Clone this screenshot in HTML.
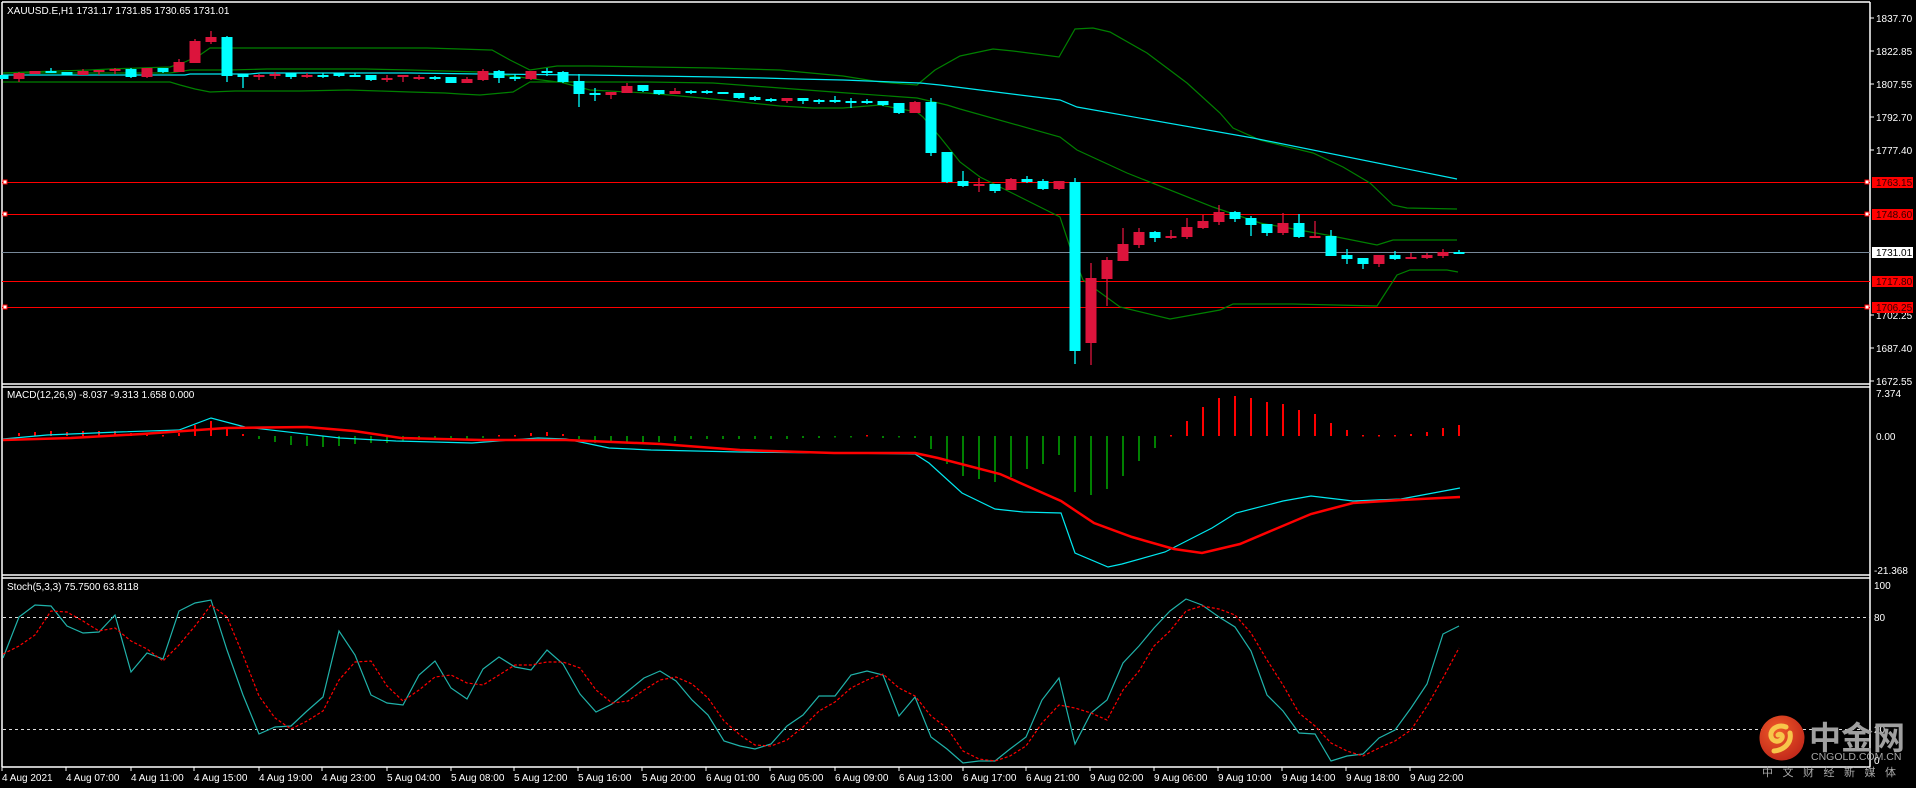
<!DOCTYPE html>
<html><head><meta charset="utf-8"><style>
html,body{margin:0;padding:0;background:#000;width:1916px;height:788px;overflow:hidden}
svg{display:block}
text{font-family:"Liberation Sans","Noto Sans CJK SC",sans-serif;font-size:10px;fill:#fff}
</style></head><body>
<svg id="s" width="1916" height="788" viewBox="0 0 1916 788" xmlns="http://www.w3.org/2000/svg">
<rect width="1916" height="788" fill="#000"/>
<!-- borders -->
<g stroke="#fff" stroke-width="1.5" fill="none">
<line x1="2" y1="2" x2="1870" y2="2"/>
<line x1="2" y1="2" x2="2" y2="767"/>
<line x1="1870" y1="2" x2="1870" y2="767"/>
<line x1="2" y1="384" x2="1870" y2="384"/>
<line x1="2" y1="387" x2="1870" y2="387"/>
<line x1="2" y1="575" x2="1870" y2="575"/>
<line x1="2" y1="578" x2="1870" y2="578"/>
<line x1="2" y1="767" x2="1870" y2="767"/>
</g>
<!-- horizontal levels -->
<g stroke="#f00" stroke-width="1">
<line x1="2" y1="182.5" x2="1870" y2="182.5"/>
<line x1="2" y1="214.5" x2="1870" y2="214.5"/>
<line x1="2" y1="281.5" x2="1870" y2="281.5"/>
<line x1="2" y1="307.5" x2="1870" y2="307.5"/>
</g>
<line x1="2" y1="252.5" x2="1870" y2="252.5" stroke="#778899"/>
<g fill="#fff" stroke="#f00" stroke-width="1">
<rect x="1865" y="180" width="4" height="4"/><rect x="1865" y="212" width="4" height="4"/><rect x="1865" y="305" width="4" height="4"/>
<rect x="3" y="180" width="4" height="4"/><rect x="3" y="212" width="4" height="4"/><rect x="3" y="305" width="4" height="4"/>
</g>
<!-- bands -->
<g fill="none" stroke-width="1.2">
<polyline stroke="#008000" points="3,73 27,72 60,71 90,70 110,69 140,68 170,67 185,62 200,55 210,48 427,48 460,49 490,50 492,50 510,60 530,70 557,66 590,66 650,67 713,68 780,70 800,72 843,76 880,82 917,85 935,70 960,56 993,49 1013,51 1059,57 1075,29 1093,28 1110,32 1147,53 1187,83 1220,113 1233,128 1260,140 1313,153 1343,167 1370,183 1393,205 1407,208 1457,209"/>
<polyline stroke="#008000" points="3,73 170,73 190,70 230,70 267,69 365,69 410,70 480,72 557,82 647,82 713,83 780,88 847,93 917,98 947,105 960,109 1060,137 1077,150 1127,173 1213,207 1260,223 1327,235 1377,245 1393,240 1457,240"/>
<polyline stroke="#008000" points="3,82 170,82 180,85 195,89 210,92 235,91 300,91 348,90 380,91 410,92 445,93 460,94 480,95 513,92 530,82 560,82 590,90 647,93 713,99 780,106 813,108 843,108 880,105 917,112 923,117 940,137 960,162 980,177 1060,217 1070,247 1083,280 1120,307 1170,319 1220,310 1233,304 1293,304 1377,306 1397,275 1410,270 1447,270 1458,272"/>
<polyline stroke="#00e8f0" points="3,75 185,75 190,74 250,74 260,73 410,73 480,74 587,75 653,76 717,77 763,78 797,79 843,80 893,82 920,83 940,85 980,90 1060,100 1077,107 1253,138 1457,179"/>
</g>
<g id="candles"></g>
<!-- MACD -->
<g id="hist"></g>
<polyline fill="none" stroke="#00e8f0" stroke-width="1.2" points="3,439 47,435 118,432 179,430 211,418 245,427 340,438 396,441 472,443 538,438 566,439 609,448 651,450 740,452 834,453 915,454 929,463 962,493 995,509 1023,512 1061,513 1075,553 1108,567 1122,564 1165,552 1212,528 1236,513 1283,501 1311,496 1353,501 1401,499 1460,488"/>
<polyline fill="none" stroke="#f00" stroke-width="2.5" points="3,440 71,438 142,434 226,428 307,427 354,431 401,438 481,440 566,440 661,444 740,450 834,453 915,453 938,458 1000,474 1061,501 1094,523 1132,537 1174,549 1202,553 1240,544 1311,514 1353,503 1401,500 1460,497"/>
<!-- Stoch -->
<g stroke="#ddd" stroke-dasharray="3,3" stroke-width="1">
<line x1="3" y1="617.5" x2="1870" y2="617.5"/>
<line x1="3" y1="729.5" x2="1870" y2="729.5"/>
</g>
<polyline fill="none" stroke="#20b2aa" stroke-width="1.2" points="3,658 19,617 35,605 51,606 67,626 83,633 99,632 115,615 131,672 147,653 163,659 179,611 195,603 211,600 227,650 243,695 259,734 275,727 291,726 307,711 323,697 339,631 355,655 371,695 387,703 403,705 419,675 435,661 451,688 467,699 483,669 499,657 515,667 531,670 547,650 563,664 580,694 596,712 612,704 628,691 644,678 660,671 676,681 692,700 708,715 724,741 740,746 755,749 771,744 787,726 803,715 819,696 835,696 851,675 867,671 883,675 899,716 915,697 931,737 947,749 963,763 979,761 995,761 1010,749 1026,737 1042,700 1059,678 1075,744 1091,713 1107,700 1123,663 1139,646 1154,628 1170,611 1186,599 1202,605 1219,617 1235,627 1251,651 1267,695 1283,711 1299,733 1315,734 1331,761 1347,756 1363,754 1379,738 1395,730 1411,708 1427,684 1443,634 1459,626"/>
<polyline fill="none" stroke="#f00" stroke-width="1.2" stroke-dasharray="3,2" points="3,654 19,646 35,635 51,611 67,612 83,621 99,631 115,628 131,641 147,649 163,661 179,645 195,626 211,605 227,617 243,655 259,696 275,718 291,729 307,721 323,711 339,680 355,662 371,661 387,686 403,701 419,690 435,677 451,675 467,683 483,685 499,675 515,665 531,665 547,662 563,662 580,668 596,690 612,703 628,701 644,690 660,680 676,677 692,684 708,698 724,721 740,735 755,745 771,746 787,740 803,727 819,711 835,702 851,688 867,680 883,674 899,688 915,696 931,716 947,728 963,751 979,759 995,761 1010,756 1026,746 1042,723 1059,705 1075,708 1091,713 1107,720 1123,690 1139,671 1154,646 1170,631 1186,611 1202,606 1219,609 1235,615 1251,633 1267,660 1283,685 1299,713 1315,726 1331,743 1347,751 1363,756 1379,748 1395,741 1411,730 1427,706 1443,678 1459,648"/>
<!-- texts -->
<text x="7" y="14">XAUUSD.E,H1  1731.17 1731.85 1730.65 1731.01</text>
<text x="7" y="398">MACD(12,26,9) -8.037 -9.313 1.658 0.000</text>
<text x="7" y="590">Stoch(5,3,3) 75.7500 63.8118</text>
<g stroke="#fff"><line x1="1870" y1="18" x2="1874" y2="18"/><line x1="1870" y1="51" x2="1874" y2="51"/><line x1="1870" y1="84" x2="1874" y2="84"/><line x1="1870" y1="117" x2="1874" y2="117"/><line x1="1870" y1="150" x2="1874" y2="150"/><line x1="1870" y1="315" x2="1874" y2="315"/><line x1="1870" y1="348" x2="1874" y2="348"/><line x1="1870" y1="381" x2="1874" y2="381"/></g>
<text x="1876" y="22">1837.70</text>
<text x="1876" y="55">1822.85</text>
<text x="1876" y="88">1807.55</text>
<text x="1876" y="121">1792.70</text>
<text x="1876" y="154">1777.40</text>
<text x="1876" y="319">1702.25</text>
<text x="1876" y="352">1687.40</text>
<text x="1876" y="385">1672.55</text>
<rect x="1872" y="177" width="41" height="11" fill="#f00"/><text x="1876" y="186" style="fill:#300">1763.15</text>
<rect x="1872" y="209" width="41" height="11" fill="#f00"/><text x="1876" y="218" style="fill:#300">1748.60</text>
<rect x="1872" y="247" width="41" height="11" fill="#fff"/><text x="1876" y="256" style="fill:#000">1731.01</text>
<rect x="1872" y="276" width="41" height="11" fill="#f00"/><text x="1876" y="285" style="fill:#300">1717.80</text>
<rect x="1872" y="302" width="41" height="11" fill="#f00"/><text x="1876" y="311" style="fill:#300">1706.25</text>
<text x="1876" y="397">7.374</text>
<text x="1876" y="440">0.00</text>
<text x="1874" y="574">-21.368</text>
<text x="1874" y="589">100</text>
<text x="1874" y="621">80</text>
<text x="1874" y="733">20</text>
<text x="1874" y="764">0</text>
<g id="tl"></g>
<text x="2" y="781">4 Aug 2021</text>
<text x="66" y="781">4 Aug 07:00</text>
<text x="131" y="781">4 Aug 11:00</text>
<text x="194" y="781">4 Aug 15:00</text>
<text x="259" y="781">4 Aug 19:00</text>
<text x="322" y="781">4 Aug 23:00</text>
<text x="387" y="781">5 Aug 04:00</text>
<text x="451" y="781">5 Aug 08:00</text>
<text x="514" y="781">5 Aug 12:00</text>
<text x="578" y="781">5 Aug 16:00</text>
<text x="642" y="781">5 Aug 20:00</text>
<text x="706" y="781">6 Aug 01:00</text>
<text x="770" y="781">6 Aug 05:00</text>
<text x="835" y="781">6 Aug 09:00</text>
<text x="899" y="781">6 Aug 13:00</text>
<text x="963" y="781">6 Aug 17:00</text>
<text x="1026" y="781">6 Aug 21:00</text>
<text x="1090" y="781">9 Aug 02:00</text>
<text x="1154" y="781">9 Aug 06:00</text>
<text x="1218" y="781">9 Aug 10:00</text>
<text x="1282" y="781">9 Aug 14:00</text>
<text x="1346" y="781">9 Aug 18:00</text>
<text x="1410" y="781">9 Aug 22:00</text>
<!-- logo -->
<defs><radialGradient id="lg" cx="0.4" cy="0.35" r="0.7"><stop offset="0" stop-color="#f05a28"/><stop offset="1" stop-color="#c0271a"/></radialGradient></defs>
<circle cx="1782" cy="738" r="22.5" fill="url(#lg)"/>
<path d="M1786 727 c-8 -3 -16 2 -15 9 c1 6 9 7 11 2 c1 -3 -2 -5 -4 -3 M1790 733 c2 10 -6 17 -16 18" fill="none" stroke="#f7c64a" stroke-width="5" stroke-linecap="round"/>
<text x="1809" y="749" style="font-size:32px;font-weight:bold;fill:#a0a0a0;font-family:'Noto Sans CJK SC',sans-serif">中金网</text>
<text x="1811" y="760" style="font-size:10.5px;fill:#a8a8a8">CNGOLD.COM.CN</text>
<text x="1762" y="776" style="font-size:11px;fill:#a8a8a8;letter-spacing:9.5px;font-family:'Noto Sans CJK SC',sans-serif">中文财经新媒体</text>
</svg>
<script>
var C=[[0,'c',75,79,75,79],[1,'r',73,79,72,82],[2,'r',71,74,71,74],[3,'c',71,73,68,73],[4,'c',72,75,72,75],[5,'r',71,75,69,75],[6,'r',70,72,70,75],[7,'r',69,71,68,74],[8,'c',69,77,68,78],[9,'r',68,77,68,78],[10,'c',68,72,68,73],[11,'r',62,72,59,72],[12,'r',41,63,39,63],[13,'r',37,42,31,44],[14,'c',37,76,36,82],[15,'c',74,77,74,88],[16,'r',75,77,74,80],[17,'r',74,76,72,79],[18,'c',73,77,73,79],[19,'r',75,77,73,78],[20,'c',75,75,73,78],[21,'c',73,76,73,77],[22,'c',75,75,73,77],[23,'c',75,80,75,81],[24,'r',78,80,75,82],[25,'r',75,76,75,82],[26,'r',77,79,75,80],[27,'c',77,77,76,80],[28,'c',77,83,77,83],[29,'r',79,83,77,83],[30,'r',71,80,69,81],[31,'c',71,78,70,83],[32,'c',77,79,74,81],[33,'r',71,79,71,80],[34,'c',71,73,68,76],[35,'c',72,82,71,83],[36,'c',81,94,74,107],[37,'c',93,95,88,101],[38,'r',92,95,92,99],[39,'r',86,93,83,93],[40,'c',85,91,85,92],[41,'c',90,94,90,95],[42,'r',91,94,88,94],[43,'c',91,93,90,94],[44,'c',91,93,90,94],[45,'c',92,94,92,94],[46,'c',93,98,93,99],[47,'c',97,100,96,101],[48,'c',99,101,98,102],[49,'r',98,101,98,103],[50,'c',98,101,98,104],[51,'c',100,100,99,104],[52,'c',100,102,96,103],[53,'c',101,101,98,108],[54,'c',101,101,99,104],[55,'c',101,105,101,106],[56,'c',103,113,103,114],[57,'r',102,113,101,113],[58,'c',102,153,98,156],[59,'c',152,182,152,183],[60,'c',181,186,171,187],[61,'r',184,186,178,192],[62,'c',184,191,184,193],[63,'r',179,190,178,190],[64,'c',179,182,176,183],[65,'c',181,189,179,190],[66,'r',181,189,181,190],[67,'c',182,351,178,364],[68,'r',278,343,263,365],[69,'r',260,279,257,306],[70,'r',244,261,228,261],[71,'r',232,245,228,248],[72,'c',232,238,231,242],[73,'r',236,238,230,239],[74,'r',227,237,218,239],[75,'r',221,228,215,229],[76,'r',212,222,205,225],[77,'c',212,219,211,222],[78,'c',218,225,216,236],[79,'c',224,233,224,236],[80,'r',223,233,213,235],[81,'c',223,237,214,238],[82,'r',236,238,221,238],[83,'c',236,256,230,256],[84,'c',255,259,249,264],[85,'c',258,264,258,269],[86,'r',255,264,255,267],[87,'c',255,259,251,260],[88,'r',257,259,253,259],[89,'r',255,258,253,259],[90,'r',252,256,249,258],[91,'c',252,252,250,254]];
var NS='http://www.w3.org/2000/svg',g=document.getElementById('candles'),h='';
C.forEach(function(d){var x=3+16*d[0],col=d[1]=='c'?'#00ffff':'#dc143c',bh=Math.max(2,d[3]-d[2]);
h+='<line x1="'+x+'" y1="'+d[4]+'" x2="'+x+'" y2="'+d[5]+'" stroke="'+col+'" stroke-width="1.3"/>';
h+='<rect x="'+(x-5.5)+'" y="'+d[2]+'" width="11" height="'+bh+'" fill="'+col+'"/>';});
g.innerHTML=h;
var H={1:433,2:432,3:431,4:432,5:431,6:431,7:431,8:433,9:434,10:435,11:433,12:425,13:421,14:428,15:434,16:439,17:442,18:445,19:446,20:447,21:446,22:444,23:443,24:443,25:441,26:440,27:439,28:439,29:439,30:438,31:435,32:435,33:433,34:432,35:434,36:439,37:443,38:443,39:443,40:444,41:442,42:441,43:439,44:439,45:439,46:439,47:439,48:439,49:439,50:438,51:438,52:437,53:437,54:435,55:438,56:437,57:438,58:449,59:464,60:476,61:479,62:482,63:477,64:469,65:464,66:455,67:492,68:495,69:489,70:476,71:461,72:448,73:435,74:421,75:407,76:398,77:396,78:398,79:402,80:404,81:410,82:414,83:423,84:430,85:435,86:435,87:435,88:434,89:432,90:428,91:425};
h='';for(var i in H){var v=H[i],x=3+16*i;var t=Math.min(v,436),b=Math.max(v,436);if(b-t<1.5){b=t+1.5;}
h+='<rect x="'+(x-1)+'" y="'+t+'" width="2" height="'+(b-t)+'" fill="'+(v>436?'#008000':'#f00')+'"/>';}
document.getElementById('hist').innerHTML=h;
var T=[2,66,131,194,259,322,387,451,514,578,642,706,770,835,899,963,1026,1090,1154,1218,1282,1346,1410];h='';
T.forEach(function(x){h+='<line x1="'+x+'" y1="767" x2="'+x+'" y2="771" stroke="#fff"/>';});
document.getElementById('tl').innerHTML=h;
</script>
</body></html>
